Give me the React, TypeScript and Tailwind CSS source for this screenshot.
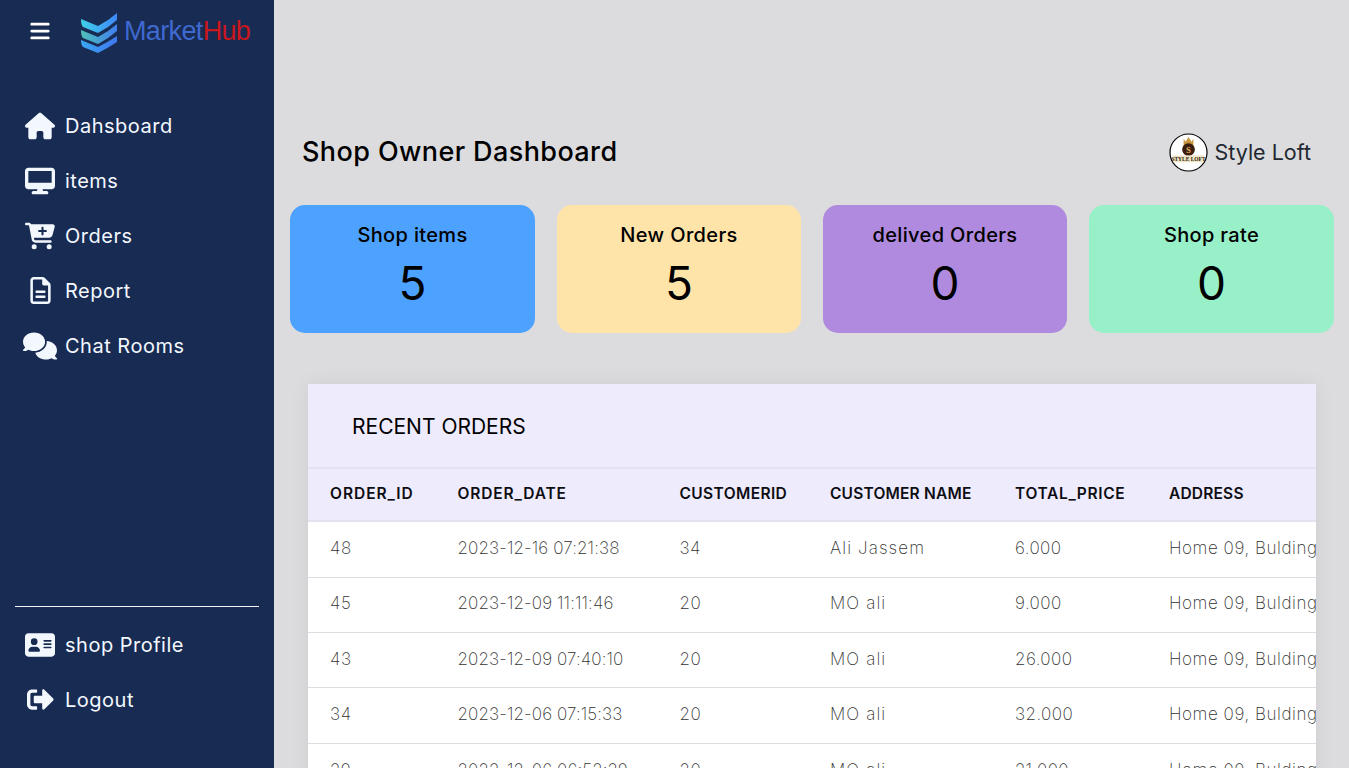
import React from 'react';
import { FaSignOutAlt } from 'react-icons/fa';
import { FaAddressCard, FaBars, FaCartPlus, FaComments, FaDesktop, FaHouse, FaRegFileLines } from 'react-icons/fa6';

const NAV_ITEMS = [
  { label: 'Dahsboard', icon: <FaHouse className="text-[30px]" /> },
  { label: 'items', icon: <FaDesktop className="text-[30px]" /> },
  { label: 'Orders', icon: <FaCartPlus className="text-[30px]" /> },
  { label: 'Report', icon: <FaRegFileLines className="text-[27px]" /> },
  { label: 'Chat Rooms', icon: <FaComments className="text-[34px]" /> },
];

const BOTTOM_ITEMS = [
  { label: 'shop Profile', icon: <FaAddressCard className="text-[30px]" /> },
  { label: 'Logout', icon: <FaSignOutAlt className="text-[27px]" /> },
];

const STATS = [
  { label: 'Shop items', value: '5', color: 'bg-[#4da2ff]' },
  { label: 'New Orders', value: '5', color: 'bg-[#ffe4aa]' },
  { label: 'delived Orders', value: '0', color: 'bg-[#af8ade]' },
  { label: 'Shop rate', value: '0', color: 'bg-[#98f0c9]' },
];

const COLUMNS = [
  { title: 'ORDER_ID', head: 'tracking-[0.97px]', cell: 'tracking-[0.6px]' },
  { title: 'ORDER_DATE', head: 'tracking-[0.87px]', cell: 'tracking-[0.1px]' },
  { title: 'CUSTOMERID', head: 'tracking-[0.38px]', cell: 'tracking-[0.5px]' },
  { title: 'CUSTOMER NAME', head: 'tracking-[0.19px]', cell: 'tracking-[1.1px]' },
  { title: 'TOTAL_PRICE', head: 'tracking-[0.66px]', cell: 'tracking-[0.4px]' },
  { title: 'ADDRESS', head: 'tracking-[0.19px]', cell: 'tracking-[0.55px]' },
];

const ORDERS = [
  ['48', '2023-12-16 07:21:38', '34', 'Ali Jassem', '6.000', 'Home 09, Bulding 12'],
  ['45', '2023-12-09 11:11:46', '20', 'MO ali', '9.000', 'Home 09, Bulding 12'],
  ['43', '2023-12-09 07:40:10', '20', 'MO ali', '26.000', 'Home 09, Bulding 12'],
  ['34', '2023-12-06 07:15:33', '20', 'MO ali', '32.000', 'Home 09, Bulding 12'],
  ['39', '2023-12-06 06:52:39', '20', 'MO ali', '31.000', 'Home 09, Bulding 12'],
];

const Logo = () => (
  <div className="flex items-center">
    <svg width="38" height="44" viewBox="0 0 38 44" className="shrink-0">
      <defs>
        <linearGradient id="chevTop" gradientUnits="userSpaceOnUse" x1="0" y1="0" x2="37" y2="0">
          <stop offset="0" stopColor="#3fd0e6" />
          <stop offset="1" stopColor="#3f86f8" />
        </linearGradient>
        <linearGradient id="chevMid" gradientUnits="userSpaceOnUse" x1="0" y1="0" x2="37" y2="0">
          <stop offset="0" stopColor="#4fc0b8" />
          <stop offset="1" stopColor="#3f7cf0" />
        </linearGradient>
        <linearGradient id="chevBot" gradientUnits="userSpaceOnUse" x1="0" y1="0" x2="37" y2="0">
          <stop offset="0" stopColor="#3aa8f4" />
          <stop offset="1" stopColor="#3f74ec" />
        </linearGradient>
      </defs>
      <path d="M0 10 L17 17 Q27 12 36 4 V11 Q27 19 17 24 L2 18 Q0 16 0 10 Z" fill="url(#chevTop)" />
      <path d="M0 21 L17 28 Q27 23 36 15 V22 Q27 30 17 35 L2 29 Q0 27 0 21 Z" fill="url(#chevMid)" />
      <path d="M0 31 L17 38 Q27 33 36 27 V33 Q27 39 17 44 L2 38 Q0 36 0 31 Z" fill="url(#chevBot)" />
    </svg>
    <span className="ml-[5px] font-['Liberation_Sans',sans-serif] text-[27px] leading-none tracking-[-0.65px] text-[#3f69cf]">
      Market<span className="text-[#c9171e]">Hub</span>
    </span>
  </div>
);

const ShopAvatar = () => (
  <svg width="39" height="39" viewBox="0 0 40 40" className="shrink-0">
    <circle cx="20" cy="20" r="19" fill="#fff" stroke="#000" strokeWidth="1.2" />
    <path d="M15 6 L17 9 L20 4 L23 9 L25 6 V13 H15 Z" fill="#c9963c" />
    <circle cx="20" cy="17" r="6.5" fill="#3a1d0e" />
    <text x="20" y="20" textAnchor="middle" fontSize="9" fontWeight="700" fill="#e3b25a" fontFamily="Liberation Serif, serif">S</text>
    <rect x="4" y="23" width="32" height="7" fill="#f0e4c4" />
    <text x="20" y="29" textAnchor="middle" fontSize="5.6" fontWeight="700" fill="#2a1a0c" fontFamily="Liberation Serif, serif">STYLE LOFT</text>
  </svg>
);

const SideRow = ({ label, icon }: { label: string; icon: React.ReactNode }) => (
  <div className="flex h-[55px] items-center text-[#f3f8ff]">
    <div className="flex w-[65px] shrink-0 items-center justify-center pl-[15px]">{icon}</div>
    <span className="text-[20px] leading-none tracking-[0.5px]">{label}</span>
  </div>
);

export default function App() {
  return (
    <div className="flex h-screen overflow-hidden bg-[#dcdcde] font-['Inter',sans-serif]">
      <aside className="flex w-[274px] shrink-0 flex-col bg-[#182b52]">
        <div className="flex h-[62px] items-center">
          <div className="flex w-[80px] justify-center text-white">
            <FaBars className="text-[22px]" />
          </div>
          <div className="ml-[1px]">
            <Logo />
          </div>
        </div>
        <nav className="flex-1 pt-[36px]">
          {NAV_ITEMS.map((item) => (
            <SideRow key={item.label} {...item} />
          ))}
        </nav>
        <div className="mx-[15px] border-t border-[#f3f3f3]" />
        <div className="mt-[10px] mb-[41px]">
          {BOTTOM_ITEMS.map((item) => (
            <SideRow key={item.label} {...item} />
          ))}
        </div>
      </aside>

      <main className="min-w-0 flex-1 overflow-hidden pt-[128px] pl-[16px] pr-[15px]">
        <div className="flex h-[48px] items-center justify-between pl-[12px] pr-[23px]">
          <h1 className="text-[27px] font-medium tracking-[0.4px] text-black">Shop Owner Dashboard</h1>
          <div className="flex items-center gap-[6px]">
            <ShopAvatar />
            <span className="text-[21.5px] text-[#222831]">Style Loft</span>
          </div>
        </div>

        <div className="mt-[29px] grid grid-cols-[245px_244px_244px_245px] gap-[22px]">
          {STATS.map((stat) => (
            <div key={stat.label} className={`flex h-[128px] flex-col items-center rounded-[15px] pt-[18px] ${stat.color}`}>
              <div className="text-[20px] leading-[24px] font-medium tracking-[0.35px] text-black">{stat.label}</div>
              <div className="mt-[8px] text-[46px] leading-[56px] text-black">{stat.value}</div>
            </div>
          ))}
        </div>

        <section className="mt-[51px] mr-[18px] ml-[18px] overflow-hidden bg-white shadow-[0_0_20px_rgba(0,0,0,0.06)]">
          <div className="flex h-[83px] items-center bg-[#eeebfd] pt-[2px] pl-[44px] text-[21px] text-black">RECENT ORDERS</div>
          <table className="w-[1100px] table-fixed border-collapse text-left">
            <colgroup>
              <col className="w-[127.5px]" />
              <col className="w-[222px]" />
              <col className="w-[150.5px]" />
              <col className="w-[185px]" />
              <col className="w-[154px]" />
              <col className="w-[261px]" />
            </colgroup>
            <thead>
              <tr className="h-[53px] border-y-2 border-[#e3e2ee] bg-[#eeebfd]">
                {COLUMNS.map((col) => (
                  <th key={col.title} className={`pb-[1px] pl-[22px] text-[15.5px] font-semibold whitespace-nowrap text-[#0d0d12] ${col.head}`}>{col.title}</th>
                ))}
              </tr>
            </thead>
            <tbody>
              {ORDERS.map((row) => (
                <tr key={row[0]} className="h-[55.4px] border-b border-[#dedee2] first:h-[56px]">
                  {row.map((cell, i) => (
                    <td key={i} className={`overflow-hidden pb-[1px] pl-[22px] text-[17px] font-extralight whitespace-nowrap text-[#333] ${COLUMNS[i].cell}`}>{cell}</td>
                  ))}
                </tr>
              ))}
            </tbody>
          </table>
        </section>
      </main>
    </div>
  );
}
